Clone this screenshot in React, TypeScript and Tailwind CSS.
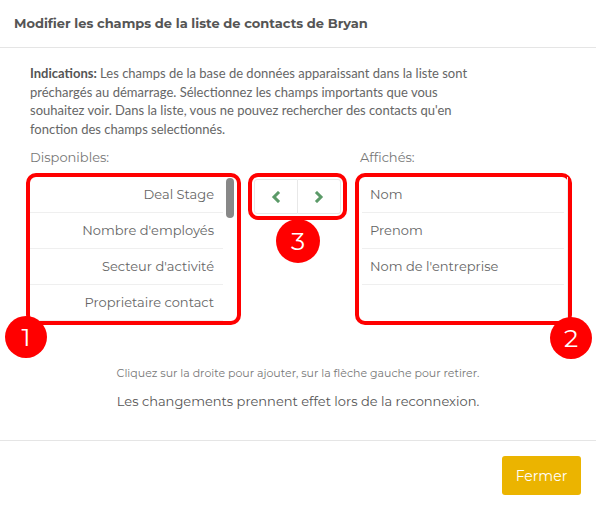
import React from 'react';

const available = ['Deal Stage', "Nombre d'employés", "Secteur d'activité", 'Proprietaire contact'];
const shown = ['Nom', 'Prenom', "Nom de l'entreprise"];

const Marker = ({ n, className }: { n: string; className: string }) => (
  <div
    className={`absolute flex items-center justify-center rounded-full bg-[#ff0000] text-white text-[25px] leading-none ${className}`}
  >
    {n}
  </div>
);

const Chevron = ({ dir }: { dir: 'left' | 'right' }) => (
  <svg width="10" height="12" viewBox="0 0 10 12" fill="none">
    <path
      d={dir === 'left' ? 'M7 2L3 6l4 4' : 'M3 2l4 4-4 4'}
      stroke="#5b9a68"
      strokeWidth="3"
      strokeLinecap="square"
    />
  </svg>
);

const App: React.FC = () => {
  return (
    <div className="w-[596px] h-[510px] bg-white text-[#666] font-['Montserrat','Open_Sans',sans-serif] flex flex-col">
      {/* Header */}
      <div className="h-[48px] border-b border-[#e5e5e5] px-[14px] flex items-center">
        <h1 className="text-[13px] font-bold text-[#555]">Modifier les champs de la liste de contacts de Bryan</h1>
      </div>

      {/* Body */}
      <div className="flex-1 px-[30px] pt-[16px]">
        <p className="font-['Lato',sans-serif] text-[13px] leading-[18.5px] text-[#666]">
          <span className="font-bold text-[#555]">Indications:</span> Les champs de la base de données apparaissant dans la liste sont
          <br />
          préchargés au démarrage. Sélectionnez les champs importants que vous
          <br />
          souhaitez voir. Dans la liste, vous ne pouvez rechercher des contacts qu'en
          <br />
          fonction des champs selectionnés.
        </p>

        <div className="mt-[10px] flex text-[13px] leading-[18px] text-[#777]">
          <span className="w-[330px]">Disponibles:</span>
          <span>Affichés:</span>
        </div>

        <div className="mt-[7px] -ml-[4px] -mr-[10px] flex items-start">
          {/* Available list */}
          <div className="relative shrink-0 w-[215px] h-[152px] border-4 border-[#ff0000] rounded-[10px]">
            <div className="flex h-full">
              <ul className="flex-1">
                {available.map((item) => (
                  <li
                    key={item}
                    className="h-[36px] flex items-center justify-end pr-[9px] border-b border-[#efefef] text-[13px]"
                  >
                    {item}
                  </li>
                ))}
              </ul>
              <div className="w-[14px] pt-[1px] flex justify-center">
                <div className="w-[8px] h-[40px] rounded-full bg-[#888]" />
              </div>
            </div>
            <Marker n="1" className="w-[42px] h-[42px] -left-[25px] top-[139px]" />
          </div>

          {/* Move buttons */}
          <div className="relative shrink-0 ml-[7px] w-[99px] h-[47px] border-4 border-[#ff0000] rounded-[10px] p-[2px] flex">
            <button className="flex-1 flex items-center justify-center border border-[#e8e8e8] rounded-l-[3px] bg-white">
              <Chevron dir="left" />
            </button>
            <button className="flex-1 flex items-center justify-center border border-l-0 border-[#e8e8e8] rounded-r-[3px] bg-white">
              <Chevron dir="right" />
            </button>
            <Marker n="3" className="w-[44px] h-[44px] left-[24px] top-[42px]" />
          </div>

          {/* Shown list */}
          <div className="relative shrink-0 ml-[8px] w-[217px] h-[152px] border-4 border-[#ff0000] rounded-[10px]">
            <ul className="h-full px-[3px] border-r border-[#efefef]">
              {shown.map((item) => (
                <li key={item} className="h-[36px] flex items-center pl-[8px] border-b border-[#efefef] text-[13px]">
                  {item}
                </li>
              ))}
            </ul>
            <Marker n="2" className="w-[42px] h-[42px] left-[191px] top-[140px]" />
          </div>
        </div>

        <p className="mt-[40px] text-center text-[11px] leading-[16px] text-[#777]">
          Cliquez sur la droite pour ajouter, sur la flèche gauche pour retirer.
        </p>
        <p className="mt-[11px] text-center text-[13px] leading-[18px] text-[#555]">
          Les changements prennent effet lors de la reconnexion.
        </p>
      </div>

      {/* Footer */}
      <div className="h-[70px] border-t border-[#e5e5e5] flex items-start justify-end pr-[15px] pt-[15px]">
        <button className="w-[79px] h-[39px] pt-[2px] rounded-[3px] bg-[#ebb400] text-white text-[14px]">Fermer</button>
      </div>
    </div>
  );
};

export default App;
